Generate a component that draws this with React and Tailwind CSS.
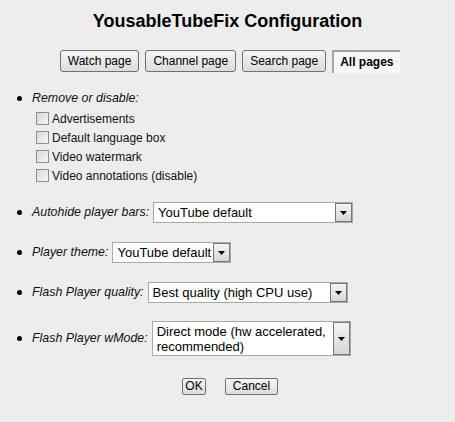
import React from 'react';

const Triangle = () => (
  <svg width="7" height="4" viewBox="0 0 7 4">
    <path d="M0 0 H7 L3.5 4 Z" fill="#000" />
  </svg>
);

// fake Windows-style dropdown
const Select = ({ className, children }) => (
  <div className={`flex border border-[#a9a9a9] bg-white ${className}`}>
    <div className="flex-1 flex items-center pl-[4px] text-[13px] leading-[15px] text-black">{children}</div>
    <div className="w-[17px] border border-[#767676] bg-linear-to-b from-[#f5f5f5] to-[#d6d6d6] flex items-center justify-center">
      <Triangle />
    </div>
  </div>
);

const Checkbox = ({ label }) => (
  <div className="flex items-center h-[19px] pl-[36px]">
    <span className="w-[13px] h-[13px] border border-[#8e8e8e] bg-linear-to-br from-[#d8d8d8] to-[#f7f7f7]" />
    <span className="ml-[3px] text-[12px] text-[#111]">{label}</span>
  </div>
);

const Bullet = () => <span className="ml-[17px] mr-[10px] w-[5px] h-[5px] rounded-full bg-black shrink-0" />;

const Row = ({ label, className, children }) => (
  <div className={`flex items-center ${className}`}>
    <Bullet />
    <span className="italic text-[12.4px] text-[#111] mr-[4px]">{label}</span>
    {children}
  </div>
);

const tabBtn = 'h-[22px] px-[7px] border border-[#707070] rounded-[3px] bg-linear-to-b from-[#f6f6f6] to-[#dcdcdc] text-[12px] text-black';

const App = () => {
  return (
    <div className="min-h-screen bg-[#ededed] font-['Liberation_Sans',Arial,sans-serif] text-black">
      <h1 className="pt-[10px] text-center text-[18px] leading-[22px] font-bold">YousableTubeFix Configuration</h1>

      {/* Page tabs */}
      <div className="mt-[18px] flex justify-center items-start gap-[6px] pl-[5px]">
        <button className={tabBtn}>Watch page</button>
        <button className={tabBtn}>Channel page</button>
        <button className={tabBtn}>Search page</button>
        <div className="h-[23px] w-[68px] border-l-2 border-t-2 border-[#a3a3a3] bg-[#f7f7f7] pl-[6px] text-[12px] font-bold leading-[20px]">All pages</div>
      </div>

      <Row label="Remove or disable:" className="h-[16px] mt-[17px]" />
      <div className="mt-[3px]">
        <Checkbox label="Advertisements" />
        <Checkbox label="Default language box" />
        <Checkbox label="Video watermark" />
        <Checkbox label="Video annotations (disable)" />
      </div>

      <Row label="Autohide player bars:" className="mt-[17px]">
        <Select className="w-[200px] h-[21px]">YouTube default</Select>
      </Row>

      <Row label="Player theme:" className="mt-[19px]">
        <Select className="w-[119px] h-[21px]">YouTube default</Select>
      </Row>

      <Row label="Flash Player quality:" className="mt-[19px]">
        <Select className="w-[200px] h-[21px]">Best quality (high CPU use)</Select>
      </Row>

      <Row label="Flash Player wMode:" className="mt-[18px]">
        <Select className="w-[199px] h-[35px]">
          <span>Direct mode (hw accelerated,<br />recommended)</span>
        </Select>
      </Row>

      <div className="mt-[22px] flex justify-center gap-[19px] pl-[5px]">
        <button className="w-[24px] h-[17px] border border-[#707070] rounded-[2px] bg-linear-to-b from-[#f6f6f6] to-[#dcdcdc] text-[12px] leading-[15px]">OK</button>
        <button className="w-[53px] h-[17px] border border-[#707070] rounded-[2px] bg-linear-to-b from-[#f6f6f6] to-[#dcdcdc] text-[12px] leading-[15px]">Cancel</button>
      </div>
    </div>
  );
};

export default App;
